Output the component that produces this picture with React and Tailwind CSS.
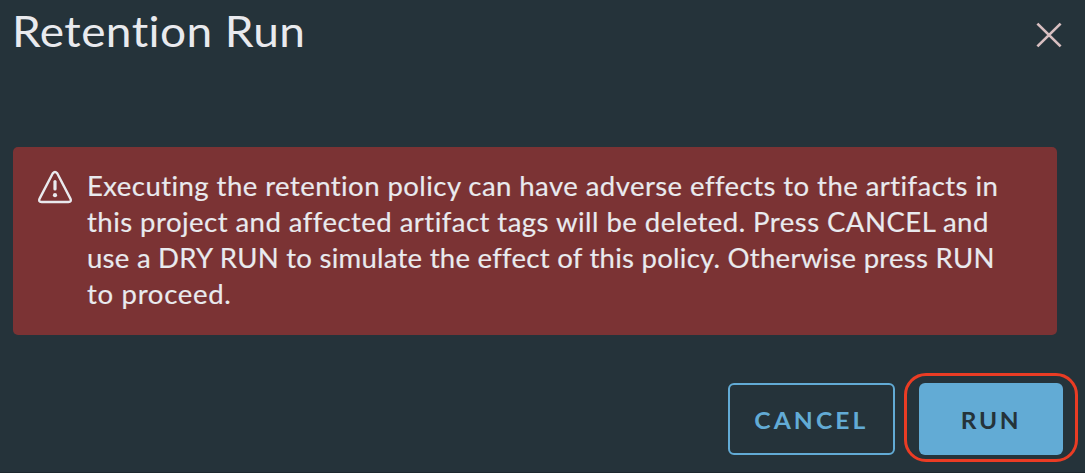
const lines = [
  { text: 'Executing the retention policy can have adverse effects to the artifacts in', tracking: 'tracking-[0.4px]' },
  { text: 'this project and affected artifact tags will be deleted. Press CANCEL and', tracking: 'tracking-[0.42px]' },
  { text: 'use a DRY RUN to simulate the effect of this policy. Otherwise press RUN', tracking: 'tracking-[0.23px]' },
  { text: 'to proceed.', tracking: 'tracking-[0.65px]' },
];

function WarningIcon() {
  return (
    <svg className="mt-[23px] h-[34px] w-9 shrink-0" viewBox="0 0 36 34" fill="none" stroke="#e9eaee" strokeLinecap="round" strokeLinejoin="round">
      <path strokeWidth="2.4" d="M15.8 3.2Q18 .8 20.2 3.2L33.4 28.6Q34.9 32 31.4 32H4.6Q1.1 32 2.6 28.6Z" />
      <path strokeWidth="3.2" d="M18 11.6V19" />
      <circle cx="18" cy="25.2" r="2.1" fill="#e9eaee" stroke="none" />
    </svg>
  );
}

export default function App() {
  return (
    <div className="flex h-[473px] w-[1085px] flex-col border-b border-[#1d282e] bg-[#25333a] font-['Lato','Open_Sans',sans-serif]">
      <header className="flex h-[147px] items-start justify-between pl-[12px] pr-[23px]">
        <h1 className="mt-[5px] origin-left scale-x-107 whitespace-nowrap text-[43px] leading-[52px] tracking-[0.4px] text-[#e9eaee]">Retention Run</h1>
        <button aria-label="Close" className="mt-[22px]">
          <svg className="h-[26px] w-[26px]" viewBox="0 0 26 26" fill="none" stroke="#d8bfc1" strokeWidth="2.7">
            <path d="M1.4 1.6L24.6 24.4M24.6 1.6L1.4 24.4" />
          </svg>
        </button>
      </header>
      <div role="alert" className="ml-[13px] flex h-[188px] w-[1044px] rounded-[5px] bg-[#7b3334] pl-6">
        <WarningIcon />
        <p className="ml-[14px] mt-[21px] text-[26px] leading-9 text-[#e9eaee] [-webkit-text-stroke:0.15px]">
          {lines.map((line) => (
            <span key={line.text} className={`block w-fit origin-left scale-x-106 whitespace-nowrap ${line.tracking}`}>{line.text} </span>
          ))}
        </p>
      </div>
      <footer className="mt-12 flex justify-end gap-6 pr-[22px] text-[23.5px] font-bold">
        <button className="flex h-[72px] w-[167px] items-center justify-center rounded-[6px] border-2 border-[#62abd5] text-[#62abd5]">
          <span className="mt-[3px] scale-x-105 tracking-[2.9px]">CANCEL</span>
        </button>
        <div className="relative">
          <button className="flex h-[72px] w-36 items-center justify-center rounded-[6px] bg-[#62abd5] text-[#25333a]">
            <span className="mt-[3px] scale-x-104 tracking-[2.5px]">RUN</span>
          </button>
          <div className="pointer-events-none absolute -left-[15px] -top-[10px] h-[89px] w-[174px] rounded-[22px] border-3 border-[#ea3c24]" />
        </div>
      </footer>
    </div>
  );
}
